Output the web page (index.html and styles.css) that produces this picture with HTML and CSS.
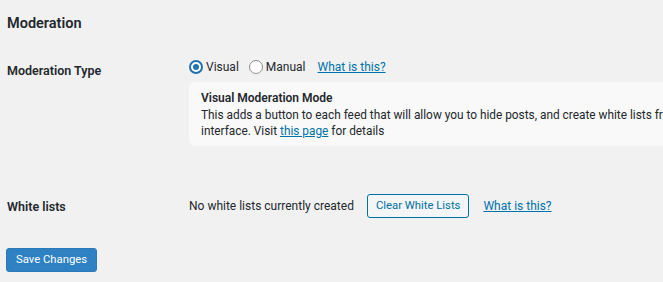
FILE: index.html
```html
<!DOCTYPE html>
<html lang="en">
  <head>
    <meta charset="UTF-8">
    <title>Moderation settings</title>
    <link rel="stylesheet" href="styles.css">
  </head>
  <body>
    <h2 class="ttl">Moderation</h2>
    <form class="frm">
      <div class="row r1">
        <div class="th th1">Moderation Type</div>
        <div class="td">
          <div class="opts">
            <label class="rd"><span class="dot on"></span>Visual</label>
            <label class="rd"><span class="dot"></span>Manual</label>
            <a href="#" class="lnk wl">What is this?</a>
          </div>
          <div class="box">
            <strong>Visual Moderation Mode</strong>
            <p>This adds a button to each feed that will allow you to hide posts, and create white lists from the front end using a visual interface. Visit <a href="#" class="lnk">this page</a> for details</p>
          </div>
        </div>
      </div>
      <div class="row r2">
        <div class="th">White lists</div>
        <div class="td opts">
          <span>No white lists currently created</span>
          <button type="button" class="b bs">Clear White Lists</button>
          <a href="#" class="lnk">What is this?</a>
        </div>
      </div>
      <button type="submit" class="b bp">Save Changes</button>
    </form>
  </body>
</html>
```

FILE: styles.css
```css
body {color: #23282d; background: #f1f1f1; margin: 0; padding: 0 7px;
  font-family: Roboto, "Liberation Sans", sans-serif; font-size: 12px;
  overflow: hidden;}
.ttl {font-size: 14.5px; font-weight: 600; margin: 15px 0 0; line-height: 18px;}
.row {display: grid; grid-template-columns: 182px 1fr;}
.r1 {margin-top: 27px;}
.r2 {margin-top: 48px; align-items: center;}
.th {font-weight: 600; font-size: 12.5px;}
.th1 {padding-top: 3px;}
.opts {display: flex; align-items: center; white-space: nowrap;}
.rd {display: flex; align-items: center; margin-right: 10px;}
.dot {width: 14px; height: 14px; border: 1px solid #8c8f94; border-radius: 50%;
  background: #fff; margin-right: 3px; box-sizing: border-box;
  display: grid; place-items: center;}
.dot.on {border: 2px solid #2271b1;}
.dot.on::before {content: ''; width: 6px; height: 6px; border-radius: 50%;
  background: #2271b1;}
.lnk {color: #0073aa; text-decoration: underline;}
.wl {margin-left: 2px;}
.box {background: #f9f9f9; border-radius: 6px; margin-top: 8px;
  padding: 8px 0 0 12px; height: 56px; width: 720px; line-height: 16.5px;
  overflow: hidden;}
.box strong {display: block; font-weight: 600;}
.box p {margin: 0; width: 660px; font-size: 11.85px;}
.b {font-family: inherit; font-size: 11.3px; line-height: 22px; padding: 0 8px;
  border-radius: 3px; cursor: pointer;}
.bs {color: #0071a1; background: #f3f5f6; border: 1px solid #0071a1;
  margin: 0 14px 0 13px;}
.bp {color: #fff; background: #2e82c4; border: 1px solid #2a79b8;
  margin-top: 30px; margin-left: -1px; padding: 0 9px;}
```
